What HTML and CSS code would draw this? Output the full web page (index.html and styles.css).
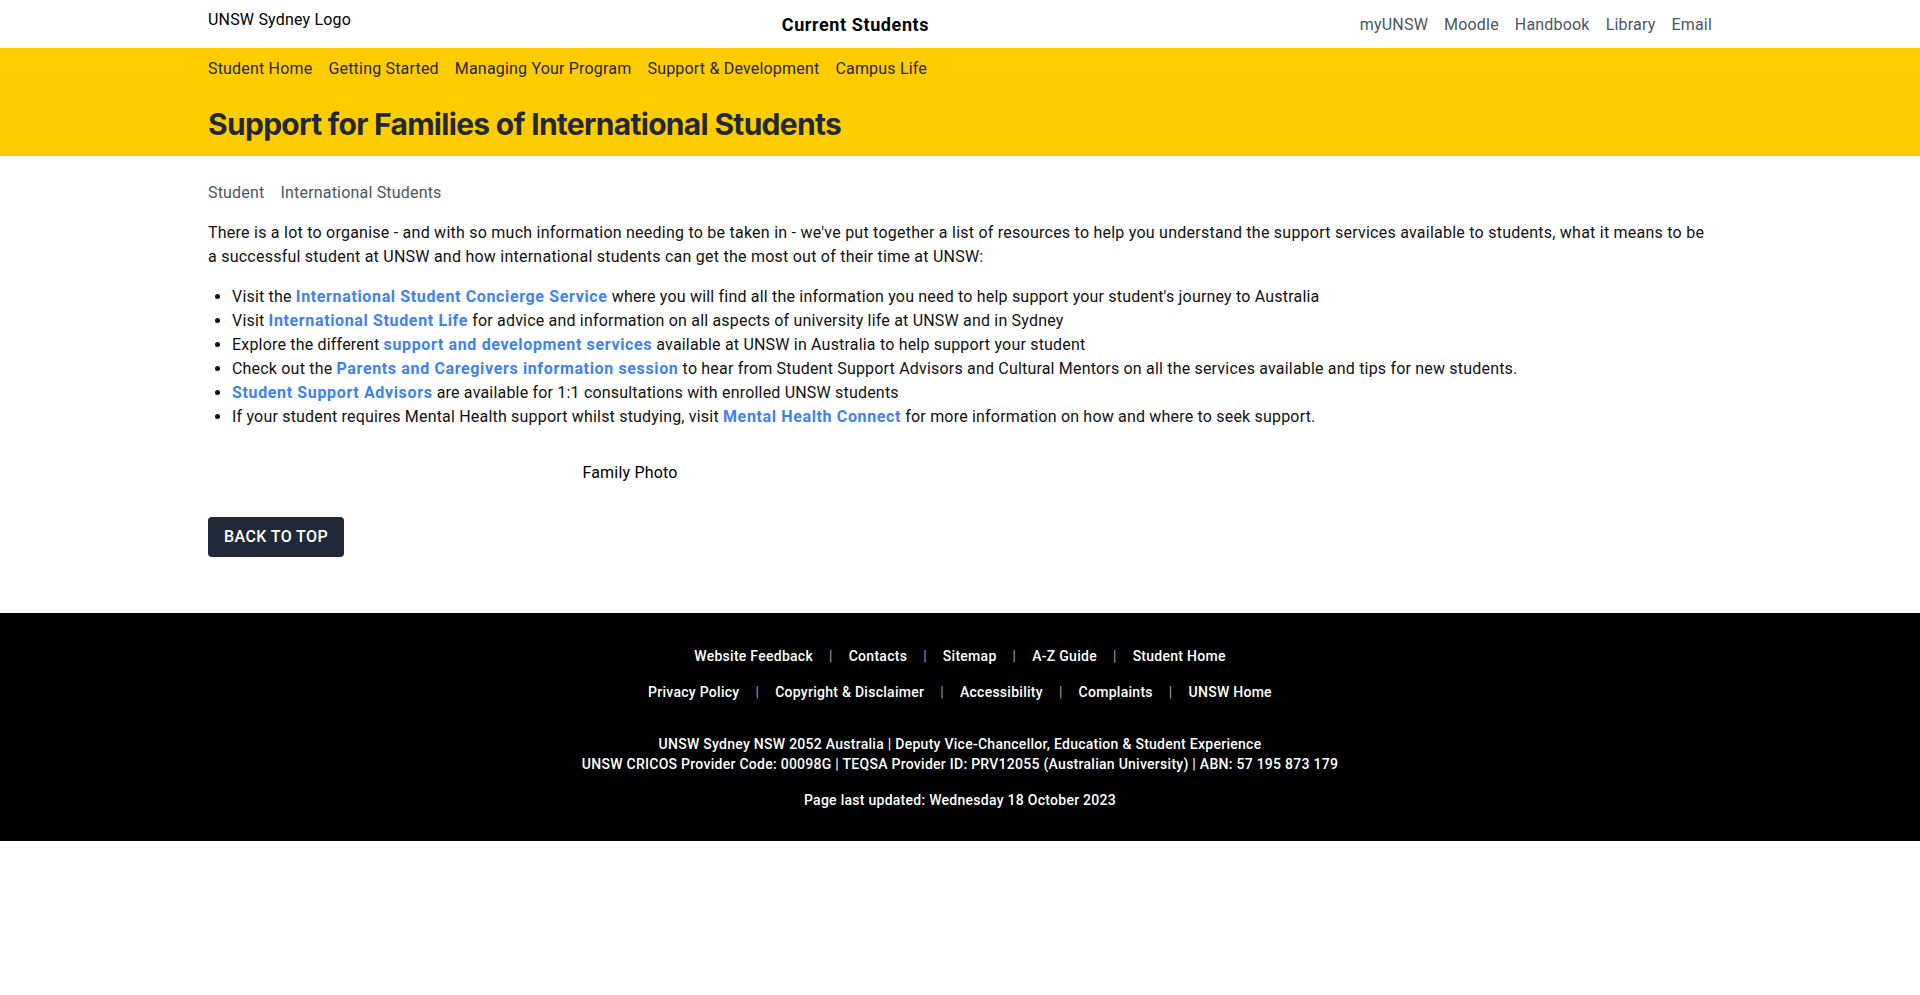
FILE: index.html
```html
<!DOCTYPE html>
<html lang="en">
<head>
<meta charset="utf-8">
<title>Support for Families of International Students</title>
<link rel="stylesheet" href="styles.css">
</head>
<body>
<header class="topbar">
  <div class="container topbar-inner">
    <div class="logo">UNSW Sydney Logo</div>
    <div class="site-title">Current Students</div>
    <nav class="quick-links">
      <a href="#">myUNSW</a>
      <a href="#">Moodle</a>
      <a href="#">Handbook</a>
      <a href="#">Library</a>
      <a href="#">Email</a>
    </nav>
  </div>
</header>
<section class="banner">
  <div class="container">
    <nav class="main-nav">
      <a href="#">Student Home</a>
      <a href="#">Getting Started</a>
      <a href="#">Managing Your Program</a>
      <a href="#">Support &amp; Development</a>
      <a href="#">Campus Life</a>
    </nav>
    <h1 class="page-title">Support for Families of International Students</h1>
  </div>
</section>
<main class="container content">
  <nav class="breadcrumb">
    <a href="#">Student</a>
    <a href="#">International Students</a>
  </nav>
  <p class="intro">There is a lot to organise - and with so much information needing to be taken in - we've put together a list of resources to help you understand the support services available to students, what it means to be a successful student at UNSW and how international students can get the most out of their time at UNSW:</p>
  <ul class="resources">
    <li>Visit the <a href="#">International Student Concierge Service</a> where you will find all the information you need to help support your student's journey to Australia</li>
    <li>Visit <a href="#">International Student Life</a> for advice and information on all aspects of university life at UNSW and in Sydney</li>
    <li>Explore the different <a href="#">support and development services</a> available at UNSW in Australia to help support your student</li>
    <li>Check out the <a href="#">Parents and Caregivers information session</a> to hear from Student Support Advisors and Cultural Mentors on all the services available and tips for new students.</li>
    <li><a href="#">Student Support Advisors</a> are available for 1:1 consultations with enrolled UNSW students</li>
    <li>If your student requires Mental Health support whilst studying, visit <a href="#">Mental Health Connect</a> for more information on how and where to seek support.</li>
  </ul>
  <div class="photo">Family Photo</div>
  <a href="#" class="back-top">BACK TO TOP</a>
</main>
<footer class="footer">
  <nav class="footer-links">
    <a href="#">Website Feedback</a><span class="sep">|</span>
    <a href="#">Contacts</a><span class="sep">|</span>
    <a href="#">Sitemap</a><span class="sep">|</span>
    <a href="#">A-Z Guide</a><span class="sep">|</span>
    <a href="#">Student Home</a>
  </nav>
  <nav class="footer-links">
    <a href="#">Privacy Policy</a><span class="sep">|</span>
    <a href="#">Copyright &amp; Disclaimer</a><span class="sep">|</span>
    <a href="#">Accessibility</a><span class="sep">|</span>
    <a href="#">Complaints</a><span class="sep">|</span>
    <a href="#">UNSW Home</a>
  </nav>
  <div class="footer-info">
    <p>UNSW Sydney NSW 2052 Australia | Deputy Vice-Chancellor, Education &amp; Student Experience<br>UNSW CRICOS Provider Code: 00098G | TEQSA Provider ID: PRV12055 (Australian University) | ABN: 57 195 873 179</p>
    <p>Page last updated: Wednesday 18 October 2023</p>
  </div>
</footer>
</body>
</html>
```

FILE: styles.css
```css
* { box-sizing: border-box; }
html, body { margin: 0; padding: 0; }
body {
  font-family: Roboto, "Noto Sans", sans-serif;
  font-size: 16px;
  line-height: 24px;
  letter-spacing: 0.19px;
  color: #111111;
  background: #ffffff;
}
a { text-decoration: none; color: inherit; }
.container {
  max-width: 1536px;
  margin: 0 auto;
  padding: 0 16px;
}
.topbar { height: 48px; }
.topbar-inner {
  display: flex;
  align-items: center;
  justify-content: space-between;
  height: 48px;
}
.logo {
  font-size: 16px;
  align-self: flex-start;
  padding-top: 8px;
  color: #000;
}
.site-title {
  font-weight: 700;
  font-size: 18px;
  letter-spacing: 0.6px;
  color: #000;
  padding-top: 2px;
}
.quick-links {
  display: flex;
  gap: 16px;
  color: #4b5563;
  font-size: 16px;
  padding-top: 1px;
}
.banner {
  background: #ffcc00;
  height: 108px;
}
.main-nav {
  display: flex;
  gap: 16px;
  color: #1f2937;
  padding-top: 9px;
}
.page-title {
  margin: 25px 0 0;
  font-family: Inter, Roboto, sans-serif;
  font-size: 30px;
  line-height: 36px;
  font-weight: 700;
  letter-spacing: -0.7px;
  color: #1f2937;
}
.content { padding-top: 25px; padding-bottom: 56px; }
.breadcrumb {
  display: flex;
  gap: 16px;
  color: #4b5563;
}
.intro { margin: 16px 0 0; letter-spacing: 0.24px; }
.resources {
  margin: 16px 0 0;
  padding-left: 24px;
}
.resources a { color: #3b82f6; font-weight: 700; letter-spacing: 0.64px; }
.photo {
  width: 844px;
  text-align: center;
  margin-top: 32px;
  color: #000;
}
.back-top {
  display: inline-block;
  margin-top: 32px;
  background: #1f2937;
  color: #fff;
  font-weight: 500;
  padding: 8px 16px;
  border-radius: 4px;
  line-height: 24px;
  letter-spacing: 0.4px;
}
.footer {
  background: #000;
  color: #fff;
  font-size: 14px;
  line-height: 20px;
  font-weight: 500;
  letter-spacing: 0.27px;
  text-align: center;
  padding: 33px 0 31px;
}
.footer-links {
  display: flex;
  justify-content: center;
  gap: 16px;
}
.footer-links + .footer-links { margin-top: 16px; }
.sep { color: #9ca3af; font-weight: 400; }
.footer-info { margin-top: 32px; }
.footer-info p { margin: 0; }
.footer-info p + p { margin-top: 16px; }
```
